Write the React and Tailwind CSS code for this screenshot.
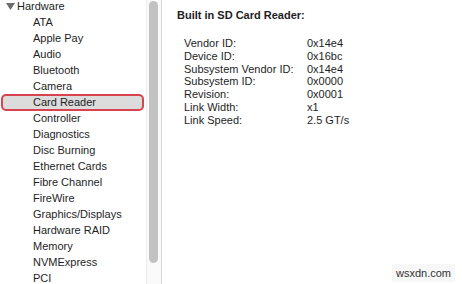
import React from 'react';

const items = [
  'ATA', 'Apple Pay', 'Audio', 'Bluetooth', 'Camera', 'Card Reader', 'Controller',
  'Diagnostics', 'Disc Burning', 'Ethernet Cards', 'Fibre Channel', 'FireWire',
  'Graphics/Displays', 'Hardware RAID', 'Memory', 'NVMExpress', 'PCI',
];

const details = [
  ['Vendor ID:', '0x14e4'],
  ['Device ID:', '0x16bc'],
  ['Subsystem Vendor ID:', '0x14e4'],
  ['Subsystem ID:', '0x0000'],
  ['Revision:', '0x0001'],
  ['Link Width:', 'x1'],
  ['Link Speed:', '2.5 GT/s'],
];

export default function App() {
  return (
    <div
      className="w-[462px] h-[284px] bg-white flex overflow-hidden text-[11px] text-[#1e1e1e] relative"
      style={{ fontFamily: '"Liberation Sans", Arial, sans-serif' }}
    >
      {/* Sidebar list */}
      <div className="w-[146px] shrink-0 overflow-hidden">
        <div className="-mt-[2px]">
          <div className="h-[16px] flex items-center pl-[6px]">
            <svg width="9" height="7" viewBox="0 0 9 7" className="mr-[2px]">
              <path d="M0 0 H9 L4.5 7 Z" fill="#6e6e6e" />
            </svg>
            <span>Hardware</span>
          </div>
          {items.map((item) => (
            <div key={item} className="h-[16px] flex items-center">
              {item === 'Card Reader' ? (
                <div className="ml-[1px] w-[143px] h-[17px] rounded-[5px] border-2 border-[#d9424f] bg-[#dcdcdc] flex items-center pl-[30px]">
                  {item}
                </div>
              ) : (
                <span className="pl-[33px]">{item}</span>
              )}
            </div>
          ))}
        </div>
      </div>

      {/* Scrollbar track */}
      <div className="w-[16px] shrink-0 border-l border-[#ececec] border-r border-r-[#d6d6d6] bg-[#fafafa] pt-[1px] pl-[2px]">
        <div className="w-[9px] h-[262px] rounded-full bg-[#c2c2c2]" />
      </div>

      {/* Detail panel */}
      <div className="flex-1 pl-[15px] pt-[9px]">
        <div className="font-bold leading-[13px]">Built in SD Card Reader:</div>
        <div className="mt-[15px] ml-[7px] grid grid-cols-[123px_auto] leading-[12.8px]">
          {details.map(([k, v]) => (
            <React.Fragment key={k}>
              <span>{k}</span>
              <span>{v}</span>
            </React.Fragment>
          ))}
        </div>
      </div>

      {/* Watermark */}
      <div className="absolute right-[7px] bottom-[2px] px-[4px] py-[1px] bg-[#f7f7f7] text-[11px] text-[#333]">
        wsxdn.com
      </div>
    </div>
  );
}
